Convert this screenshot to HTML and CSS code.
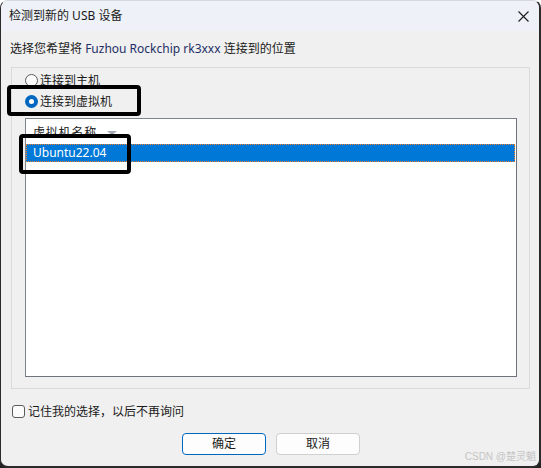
FILE: index.html
```html
<!DOCTYPE html>
<html lang="zh-CN">
<head>
<meta charset="utf-8">
<title>检测到新的 USB 设备</title>
<link rel="stylesheet" href="styles.css">
</head>
<body>
<div class="window">
  <div class="titlebar">
    <span class="title">检测到新的 USB 设备</span>
    <svg class="close" width="11" height="11" viewBox="0 0 11 11"><path d="M0.5 0.5 L10.5 10.5 M10.5 0.5 L0.5 10.5" stroke="#1b1b1b" stroke-width="1.1" fill="none"/></svg>
  </div>
  <div class="content">
    <p class="prompt">选择您希望将 <span class="device">Fuzhou Rockchip rk3xxx</span> 连接到的位置</p>
    <div class="group">
      <label class="option"><span class="radio"></span>连接到主机</label>
      <label class="option"><span class="radio checked"></span>连接到虚拟机</label>
      <div class="list">
        <div class="list-header"><span class="col">虚拟机名称</span><span class="sort"></span></div>
        <div class="row selected">Ubuntu22.04</div>
      </div>
    </div>
    <label class="remember"><span class="checkbox"></span>记住我的选择，以后不再询问</label>
    <div class="buttons">
      <button class="btn default">确定</button>
      <button class="btn">取消</button>
    </div>
  </div>
  <div class="mark mark-option"></div>
  <div class="mark mark-row"></div>
  <div class="watermark">CSDN @楚灵魈</div>
</div>
</body>
</html>
```

FILE: styles.css
```css
* { box-sizing: border-box; }
html, body {
  margin: 0;
  padding: 0;
  height: 100%;
}
body {
  background: linear-gradient(#ffffff 0, #ffffff 24px, #222222 60px, #222222 100%);
  font-family: "Noto Sans", "Noto Sans CJK SC", sans-serif;
  font-size: 12px;
  color: #1a1a1a;
}
.window {
  position: relative;
  width: 541px;
  height: 468px;
  background: #f0f0f0;
  border-top: 1px solid #d6d8dc;
  border-left: 1px solid #2b2b2b;
  border-right: 2px solid #2b2b2b;
  border-bottom: 2px solid #2b2b2b;
  border-radius: 8px;
  overflow: hidden;
}
.titlebar {
  height: 30px;
  background: #eef2f8;
  display: flex;
  align-items: center;
  justify-content: space-between;
  padding: 0 10px 0 8px;
}
.title {
  font-size: 12px;
  line-height: 16px;
  color: #1a1a1a;
}
.close { display: block; margin-top: 1px; }
.content {
  padding: 0 9px 0 10px;
}
.prompt {
  margin: 10px 0 0 -1px;
  line-height: 16px;
  height: 16px;
  color: #1a1a1a;
}
.device { color: #1e2f66; }
.group {
  margin-top: 10px;
  border: 1px solid #dadada;
  height: 322px;
  padding: 2px 12px 0 13px;
}
.option {
  display: flex;
  align-items: center;
  height: 21px;
  line-height: 21px;
}
.radio {
  width: 13px;
  height: 13px;
  border-radius: 50%;
  border: 1px solid #5c5c5c;
  background: #fbfbfb;
  margin-right: 2px;
  flex: none;
  position: relative;
}
.radio.checked {
  border: none;
  background: #0067c0;
}
.radio.checked::after {
  content: "";
  position: absolute;
  left: 4px;
  top: 4px;
  width: 5px;
  height: 5px;
  border-radius: 50%;
  background: #ffffff;
}
.list {
  margin-top: 6px;
  height: 259px;
  background: #ffffff;
  border: 1px solid #7f848c;
  border-right-color: #6f747c;
  border-bottom-color: #6f747c;
  padding: 0 1px 0 0;
}
.list-header {
  display: flex;
  align-items: center;
  height: 25px;
  padding-left: 7px;
}
.col { color: #1a1a1a; letter-spacing: 0.8px; }
.sort {
  margin-left: 10px;
  margin-top: 2px;
  width: 0;
  height: 0;
  border-left: 5px solid transparent;
  border-right: 5px solid transparent;
  border-top: 4px solid #a4a9b0;
}
.row {
  height: 18px;
  line-height: 16px;
  padding-left: 6px;
}
.row.selected {
  background: #0078d7;
  color: #ffffff;
  border: 1px dotted #e8802a;
}
.remember {
  display: flex;
  align-items: center;
  margin-top: 16px;
  height: 13px;
  line-height: 13px;
  margin-left: 1px;
}
.checkbox {
  width: 13px;
  height: 13px;
  border: 1px solid #5c5c5c;
  border-radius: 3px;
  background: #fbfbfb;
  margin-right: 3px;
  flex: none;
}
.buttons {
  display: flex;
  justify-content: center;
  gap: 10px;
  margin-top: 15px;
  margin-left: 1px;
}
.btn {
  width: 84px;
  height: 22px;
  border: 1px solid #d0d0d0;
  border-radius: 4px;
  background: #fdfdfd;
  font: inherit;
  font-size: 12px;
  color: #1a1a1a;
  padding: 0;
  line-height: 18px;
}
.btn.default {
  border-color: #0067c0;
}
.mark {
  position: absolute;
  border: 4px solid #000000;
  border-radius: 4px;
}
.mark-option {
  left: 6px;
  top: 84px;
  width: 134px;
  height: 31px;
}
.mark-row {
  left: 18px;
  top: 133px;
  width: 112px;
  height: 40px;
}
.watermark {
  position: absolute;
  right: 3px;
  bottom: 3px;
  font-size: 10px;
  color: #c4c4c4;
  font-family: "Liberation Sans", "Noto Sans CJK SC", sans-serif;
}
```
